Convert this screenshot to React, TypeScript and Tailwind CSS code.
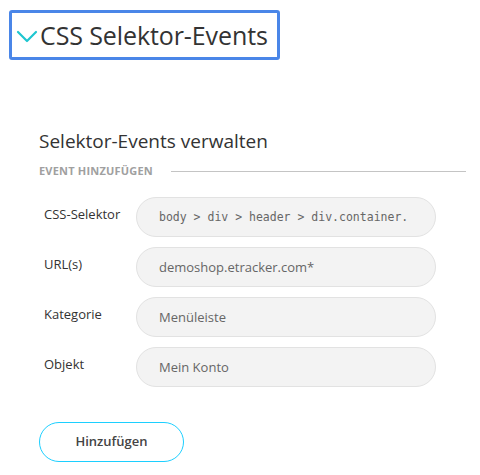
const fields = [
  { label: 'CSS-Selektor', value: 'body > div > header > div.container.', mono: true },
  { label: 'URL(s)', value: 'demoshop.etracker.com*', mono: false },
  { label: 'Kategorie', value: 'Menüleiste', mono: false },
  { label: 'Objekt', value: 'Mein Konto', mono: false },
]

export default function App() {
  return (
    <div className="w-[480px] h-[475px] bg-white font-['Open_Sans',sans-serif] text-[#333]">
      <div className="pt-[10px] pl-[9px]">
        <div className="flex items-center w-[271px] h-[50px] border-[3px] border-[#4a86e8] rounded-[3px] pl-[4px]">
          <svg width="22" height="14" viewBox="0 0 22 14" fill="none" className="mt-[3px]">
            <path d="M2 2 L11 11 L20 2" stroke="#1fc6d0" strokeWidth="2.2" strokeLinecap="round" strokeLinejoin="round" />
          </svg>
          <h1 className="ml-[2px] text-[25px] leading-none tracking-[-0.1px] text-[#333]">CSS Selektor-Events</h1>
        </div>
      </div>

      <div className="pl-[39px] pr-[14px] pt-[69px]">
        <h2 className="text-[19px] leading-[24px] text-[#333]">Selektor-Events verwalten</h2>
        <div className="flex items-center mt-[10px] h-[16px]">
          <span className="text-[11px] font-bold text-[#a0a0a0] tracking-[0.2px]">EVENT HINZUFÜGEN</span>
          <div className="flex-1 ml-[18px] h-px bg-[#c4c4c4]" />
        </div>

        <div className="mt-[18px] flex flex-col gap-[10px]">
          {fields.map((f) => (
            <div key={f.label} className="flex items-center h-[40px]">
              <label className="w-[97px] pl-[5px] text-[13px] text-[#333] -mt-[4px]">{f.label}</label>
              <input
                readOnly
                value={f.value}
                className={`w-[300px] h-[40px] rounded-full border border-[#e2e2e2] bg-[#f3f3f3] pl-[22px] pr-[20px] text-[#666] outline-none ${
                  f.mono ? "font-['DejaVu_Sans_Mono',monospace] text-[11.5px]" : 'text-[13px]'
                }`}
              />
            </div>
          ))}
        </div>

        <button className="mt-[35px] w-[145px] h-[40px] rounded-full border border-[#1ccfff] bg-white text-[13px] font-semibold text-[#444]">
          Hinzufügen
        </button>
      </div>
    </div>
  )
}
